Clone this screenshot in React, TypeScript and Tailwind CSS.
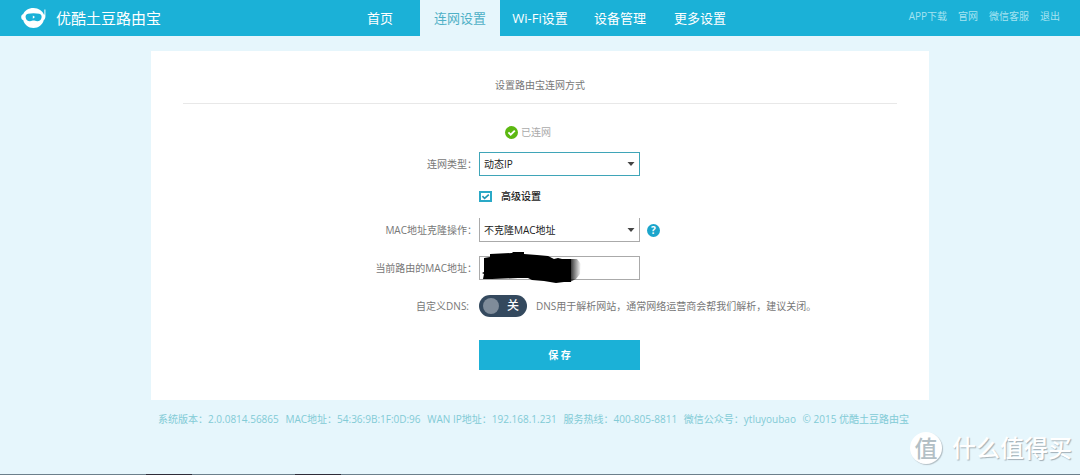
import React, { useState } from 'react';

const navItems = ['首页', '连网设置', 'Wi-Fi设置', '设备管理', '更多设置'];

const topLinks = ['APP下载', '官网', '微信客服', '退出'];

const footerItems = [
  '系统版本：2.0.0814.56865',
  'MAC地址：54:36:9B:1F:0D:96',
  'WAN IP地址：192.168.1.231',
  '服务热线：400-805-8811',
  '微信公众号：ytluyoubao',
];

function RobotLogo() {
  return (
    <svg width="26" height="22" viewBox="0 0 26 22" aria-hidden="true">
      <path
        fill="#fff"
        d="M12.5 1C17.6 1 21.6 4 22.9 7.6L23.4 7.8V2.6H24.4V9.6C24.4 11 23.9 12.6 22.8 13C21.6 17.5 17.6 21 12.5 21C7.4 21 3.4 17.5 2.2 13C.8 12.8.2 11.4.2 10C.2 8.6.8 7.4 2.1 7.2C3.6 3.6 7.4 1 12.5 1Z"
      />
      <path
        fill="#1bb1d7"
        d="M7 6.8C10.4 6 14.8 6 18.2 6.8C20 7.2 20.8 8.6 20.6 10.2C20.3 12.8 18.6 14.3 16.2 14.3C14.6 14.3 13.8 13.6 12.6 13.6C11.4 13.6 10.6 14.3 9 14.3C6.6 14.3 4.9 12.8 4.6 10.2C4.4 8.6 5.2 7.2 7 6.8Z"
      />
      <path fill="#fff" d="M11.8 8.5L14 10.1L11.8 11.7Z" />
    </svg>
  );
}

function Caret() {
  return (
    <svg className="absolute right-[5px] top-1/2 -translate-y-1/2 pointer-events-none" width="8" height="5" viewBox="0 0 8 5" aria-hidden="true">
      <path d="M.5.5H7.5L4 4.5Z" fill="#444" />
    </svg>
  );
}

// Black marker stroke that hides the address
function Scribble() {
  return (
    <svg className="absolute left-[3px] -top-1 pointer-events-none" width="102" height="32" viewBox="0 0 102 32" aria-hidden="true">
      <defs>
        <linearGradient id="fade" x1="0" x2="1">
          <stop offset="0" stopColor="#000" stopOpacity="0.85" />
          <stop offset="1" stopColor="#000" stopOpacity="0" />
        </linearGradient>
      </defs>
      <path d="M88 7L95 7L99 12L98 22L94 27L88 30Z" fill="url(#fade)" />
      <path
        d="M2 6L8 5V2L30 1L31 0H42V2L55 3L66 4L72 7L76 6L80 7L89 7V30L82 30L74 31L62 29L50 28L46 26H36L10 27H1L2 22L0 21L2 20Z"
        fill="#000"
      />
    </svg>
  );
}

export default function App() {
  const [form, setForm] = useState({
    type: 'dynamic',
    advanced: true,
    clone: 'none',
    mac: '',
    dns: false,
  });

  return (
    <div className="relative flex flex-col min-h-screen bg-[#e6f6fc] text-[10px] leading-4 text-[#777] font-['Open_Sans','Noto_Sans_CJK_SC',sans-serif]">
      {/* Header */}
      <header className="grid grid-cols-[1fr_auto_1fr] h-9 bg-[#1bb1d7] text-white">
        <div className="flex items-center gap-[9px] pl-[21px]">
          <RobotLogo />
          <span className="text-[15px] leading-5 whitespace-nowrap">优酷土豆路由宝</span>
        </div>
        <nav className="flex">
          {navItems.map((item, i) => (
            <a
              key={item}
              href="#"
              className={`flex items-center justify-center w-20 text-[13px] whitespace-nowrap ${
                i === 1 ? 'bg-[#e6f6fc] text-[#4fb0c6]' : 'text-white'
              }`}
            >
              {item}
            </a>
          ))}
        </nav>
        <div className="flex items-center justify-end gap-[11px] pr-5 pb-1 text-[#a5e3f1] whitespace-nowrap">
          {topLinks.map((item) => (
            <a key={item} href="#">{item}</a>
          ))}
        </div>
      </header>

      <main className="w-full max-w-[778px] mx-auto mt-[15px]">
        <section className="bg-white px-8 pt-[26px] pb-[30px]">
          <h1 className="pb-[10px] border-b border-[#e8e8e8] text-center">设置路由宝连网方式</h1>

          {/* Connection status */}
          <div className="flex items-center justify-center gap-[3px] mt-5 mb-3 pr-6 text-[#aaa]">
            <svg width="13" height="13" viewBox="0 0 13 13" aria-hidden="true">
              <circle cx="6.5" cy="6.5" r="6.5" fill="#5cb811" />
              <path d="M3.4 6.4L5.7 8.7L9.8 4.6" fill="none" stroke="#fff" strokeWidth="1.9" />
            </svg>
            已连网
          </div>

          <form className="grid grid-cols-[294fr_418fr] gap-x-[2px] items-center" onSubmit={(e) => e.preventDefault()}>
            <label htmlFor="type" className="text-right">连网类型：</label>
            <div className="relative w-[161px]">
              <select
                id="type"
                value={form.type}
                onChange={(e) => setForm({ ...form, type: e.target.value })}
                className="block appearance-none w-full h-6 pl-1 bg-white border border-[#3fa5b8] text-[#222] outline-none"
              >
                <option value="dynamic">动态IP</option>
                <option value="pppoe">宽带拨号</option>
                <option value="static">静态IP</option>
              </select>
              <Caret />
            </div>

            <div className="col-start-2 flex items-center h-10">
              <label className="flex items-center gap-[9px] text-[#222] font-medium">
                <span className="relative">
                  <input
                    type="checkbox"
                    checked={form.advanced}
                    onChange={(e) => setForm({ ...form, advanced: e.target.checked })}
                    className="peer block appearance-none w-[13px] h-[11px] bg-white border-2 border-[#2aa9c7]"
                  />
                  <svg className="absolute inset-0 hidden peer-checked:block pointer-events-none" width="13" height="11" viewBox="0 0 13 11" aria-hidden="true">
                    <path d="M3.4 5.2L5.6 7.3L9.8 3.6" fill="none" stroke="#2196b4" strokeWidth="1.7" />
                  </svg>
                </span>
                高级设置
              </label>
            </div>

            <label htmlFor="clone" className="text-right">MAC地址克隆操作：</label>
            <div className="flex items-center gap-[7px] my-[2px]">
              <div className="relative w-[161px]">
                <select
                  id="clone"
                  value={form.clone}
                  onChange={(e) => setForm({ ...form, clone: e.target.value })}
                  className="block appearance-none w-full h-6 pl-1 bg-white border border-t-0 border-[#aaa] text-[#222] outline-none"
                >
                  <option value="none">不克隆MAC地址</option>
                  <option value="clone">克隆MAC地址</option>
                </select>
                <Caret />
              </div>
              <button type="button" aria-label="帮助" className="flex items-center justify-center w-[13px] h-[13px] rounded-full bg-[#1ba5cb] text-white font-bold">
                ?
              </button>
            </div>

            <label htmlFor="mac" className="text-right">当前路由的MAC地址：</label>
            <div className="relative w-[161px] my-3">
              <input
                id="mac"
                type="text"
                value={form.mac}
                onChange={(e) => setForm({ ...form, mac: e.target.value })}
                className="block w-full h-6 px-1 bg-white border border-[#aaa] text-[#222] outline-none"
              />
              <Scribble />
            </div>

            <label htmlFor="dns" className="pr-2 text-right">自定义DNS:</label>
            <div className="flex items-center gap-[9px] my-[3px]">
              <label className="relative flex items-center shrink-0 w-12 h-[22px] rounded-full bg-[#34495e] cursor-pointer">
                <input
                  id="dns"
                  type="checkbox"
                  checked={form.dns}
                  onChange={(e) => setForm({ ...form, dns: e.target.checked })}
                  className="peer block appearance-none w-4 h-4 ml-1 rounded-full bg-[#7f8c9a] checked:order-last checked:ml-0 checked:mr-1"
                />
                <span className="flex-1 text-center text-[12px] font-medium text-white">{form.dns ? '开' : '关'}</span>
              </label>
              <span className="whitespace-nowrap">DNS用于解析网站，通常网络运营商会帮我们解析，建议关闭。</span>
            </div>

            <button type="submit" className="col-start-2 w-[161px] h-[30px] mt-5 bg-[#1bb1d7] text-white font-bold">
              保 存
            </button>
          </form>
        </section>

        <footer className="flex flex-wrap justify-between mt-[11px] pl-[7px] pr-5 text-[#82cbd6] whitespace-nowrap">
          {footerItems.map((item) => (
            <span key={item}>{item}</span>
          ))}
          <span>
            © 2015 <a href="#">优酷土豆路由宝</a>
          </span>
        </footer>
      </main>

      {/* Watermark */}
      <div className="absolute right-2 bottom-[11px] flex items-center gap-[10px] pointer-events-none">
        <span className="flex items-center justify-center w-8 h-8 rounded-full bg-white text-[23px] leading-8 font-medium text-[#b3bfc5] shadow-[1px_1px_1px_#b3bfc5]">
          值
        </span>
        <span className="text-[24px] leading-8 font-medium text-white [text-shadow:1px_1px_1px_#a3b0b7]">什么值得买</span>
      </div>

      {/* Taskbar edge */}
      <div className="flex h-px mt-auto bg-[#6c7f8b]">
        <span className="w-[46px] ml-[146px] bg-[#2e2c38]" />
        <span className="w-[46px] ml-[103px] bg-[#2e2c38]" />
      </div>
    </div>
  );
}
